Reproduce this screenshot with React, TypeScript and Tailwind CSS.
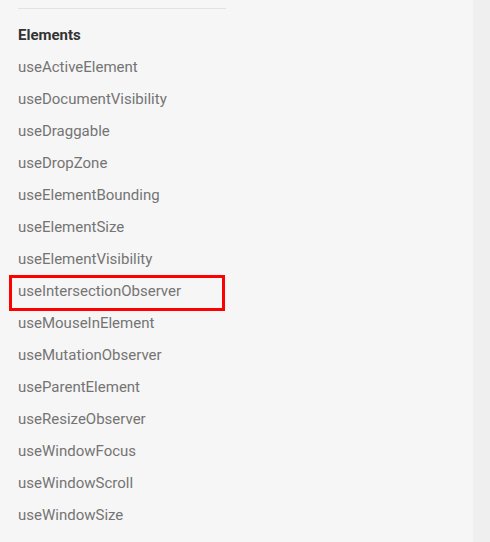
import React from "react";

const items = [
  "useActiveElement",
  "useDocumentVisibility",
  "useDraggable",
  "useDropZone",
  "useElementBounding",
  "useElementSize",
  "useElementVisibility",
  "useIntersectionObserver",
  "useMouseInElement",
  "useMutationObserver",
  "useParentElement",
  "useResizeObserver",
  "useWindowFocus",
  "useWindowScroll",
  "useWindowSize",
];

export default function App() {
  return (
    <div
      className="flex w-[490px] h-[542px] overflow-hidden bg-[#f6f6f6]"
      style={{ fontFamily: "Roboto, 'Liberation Sans', sans-serif" }}
    >
      <div className="relative w-[473px] pt-[8px] pl-[18px]">
        <div className="w-[208px] h-px bg-[#e2e2e2]" />
        <div className="pt-[10px]">
          <div className="h-[32px] leading-[32px] text-[15px] font-bold text-[#333333]">
            Elements
          </div>
          {items.map((it) => (
            <div
              key={it}
              className="relative h-[32px] leading-[32px] text-[15px] text-[#747474]"
            >
              {it}
              {it === "useIntersectionObserver" && (
                <div className="absolute left-[-9px] top-0 w-[216px] h-[36px] border-[3px] border-[#ff0000]" />
              )}
            </div>
          ))}
        </div>
      </div>
      <div className="flex-1 bg-[#efefef]" />
    </div>
  );
}
